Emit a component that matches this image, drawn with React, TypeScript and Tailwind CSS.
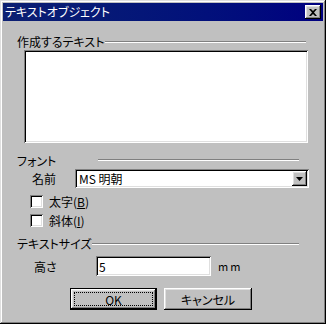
import React from "react";

const sunken =
  "shadow-[inset_1px_1px_0_#808080,inset_-1px_-1px_0_#ffffff,inset_2px_2px_0_#000000,inset_-2px_-2px_0_#dfdfdf]";
const raised =
  "shadow-[inset_-1px_-1px_0_#000000,inset_1px_1px_0_#ffffff,inset_-2px_-2px_0_#808080,inset_2px_2px_0_#dfdfdf]";

function GroupHeader({ label, lineEnd }: { label: string; lineEnd: number }) {
  return (
    <div className="flex h-[13px] items-center pl-[14px]" style={{ width: lineEnd }}>
      <span className="whitespace-nowrap text-[12px] leading-[13px] text-black">{label}</span>
      <div className="ml-px h-[2px] flex-1 border-t border-b border-t-[#808080] border-b-white" />
    </div>
  );
}

function GroupHeaderGap({ label, lineStart, lineEnd }: { label: string; lineStart: number; lineEnd: number }) {
  return (
    <div className="relative flex h-[13px] items-center pl-[14px]" style={{ width: lineEnd }}>
      <span className="whitespace-nowrap text-[12px] leading-[13px] text-black">{label}</span>
      <div
        className="absolute h-[2px] border-t border-b border-t-[#808080] border-b-white"
        style={{ left: lineStart, right: 0, top: 5 }}
      />
    </div>
  );
}

function Checkbox({ label, acc }: { label: string; acc: string }) {
  return (
    <div className="flex h-[13px] items-center pl-[27px]">
      <div className={`h-[13px] w-[13px] bg-white ${sunken}`} />
      <span className="ml-[6px] text-[12px] leading-[13px] text-black">
        {label}(<span className="underline">{acc}</span>)
      </span>
    </div>
  );
}

export default function App() {
  return (
    <div
      className="h-[324px] w-[326px] overflow-hidden bg-[#c0c0c0] p-[3px] text-black [font-family:'Noto_Sans_CJK_JP','Noto_Sans',sans-serif] [font-feature-settings:'palt'] shadow-[inset_-1px_-1px_0_#000000,inset_1px_1px_0_#dfdfdf,inset_-2px_-2px_0_#808080,inset_2px_2px_0_#ffffff]"
    >
      {/* Title bar */}
      <div className="flex h-[18px] items-center bg-gradient-to-r from-[#0c1f72] to-[#000080] pl-[2px] pr-[2px]">
        <span className="text-[12px] leading-[14px] text-white">テキストオブジェクト</span>
        <div
          className={`ml-auto flex h-[14px] w-[16px] items-center justify-center bg-[#c0c0c0] ${raised}`}
        >
          <svg width="8" height="7" viewBox="0 0 8 7">
            <path d="M0 0h2l2 2 2-2h2L5 3.5 8 7H6L4 5 2 7H0l3-3.5z" fill="#000" />
          </svg>
        </div>
      </div>

      <div className="flex flex-col">
        {/* 作成するテキスト */}
        <div className="mt-[14px]">
          <GroupHeader label="作成するテキスト" lineEnd={303} />
        </div>
        <div className={`ml-[21px] mt-[2px] h-[93px] w-[284px] bg-white ${sunken}`} />

        {/* フォント */}
        <div className="mt-[11px]">
          <GroupHeaderGap label="フォント" lineStart={95} lineEnd={296} />
        </div>
        <div className="mt-[2px] flex h-[19px] items-center">
          <span className="ml-[29px] w-[43px] text-[12px] leading-[13px]">名前</span>
          <div className={`flex h-[19px] w-[234px] items-center bg-white p-[2px] ${sunken}`}>
            <span className="flex-1 pl-[2px] text-[12px] leading-[13px]">MS 明朝</span>
            <div className={`flex h-[15px] w-[15px] items-center justify-center bg-[#c0c0c0] ${raised}`}>
              <svg width="7" height="4" viewBox="0 0 7 4">
                <path d="M0 0h7L3.5 4z" fill="#000" />
              </svg>
            </div>
          </div>
        </div>
        <div className="mt-[7px]">
          <Checkbox label="太字" acc="B" />
        </div>
        <div className="mt-[6px]">
          <Checkbox label="斜体" acc="I" />
        </div>

        {/* テキストサイズ */}
        <div className="mt-[10px]">
          <GroupHeader label="テキストサイズ" lineEnd={296} />
        </div>
        <div className="mt-[6px] flex h-[20px] items-center">
          <span className="ml-[31px] w-[62px] text-[12px] leading-[13px]">高さ</span>
          <div className={`flex h-[20px] w-[115px] items-center bg-white pl-[3px] ${sunken}`}>
            <span className="text-[12px] leading-[13px]">5</span>
          </div>
          <span className="ml-[7px] text-[11px] leading-[13px] tracking-[2px]">mm</span>
        </div>

        {/* Buttons */}
        <div className="mt-[12px] flex h-[22px] pl-[67px]">
          <div className="h-[22px] w-[87px] border border-black">
            <div className={`flex h-full w-full items-center justify-center bg-[#c0c0c0] p-[3px] ${raised}`}>
              <div className="flex h-full w-full items-center justify-center border border-dotted border-black">
                <span className="text-[12px] leading-[13px]">OK</span>
              </div>
            </div>
          </div>
          <div
            className={`ml-[7px] flex h-[22px] w-[88px] items-center justify-center bg-[#c0c0c0] ${raised}`}
          >
            <span className="text-[12px] leading-[13px]">キャンセル</span>
          </div>
        </div>
      </div>
    </div>
  );
}
